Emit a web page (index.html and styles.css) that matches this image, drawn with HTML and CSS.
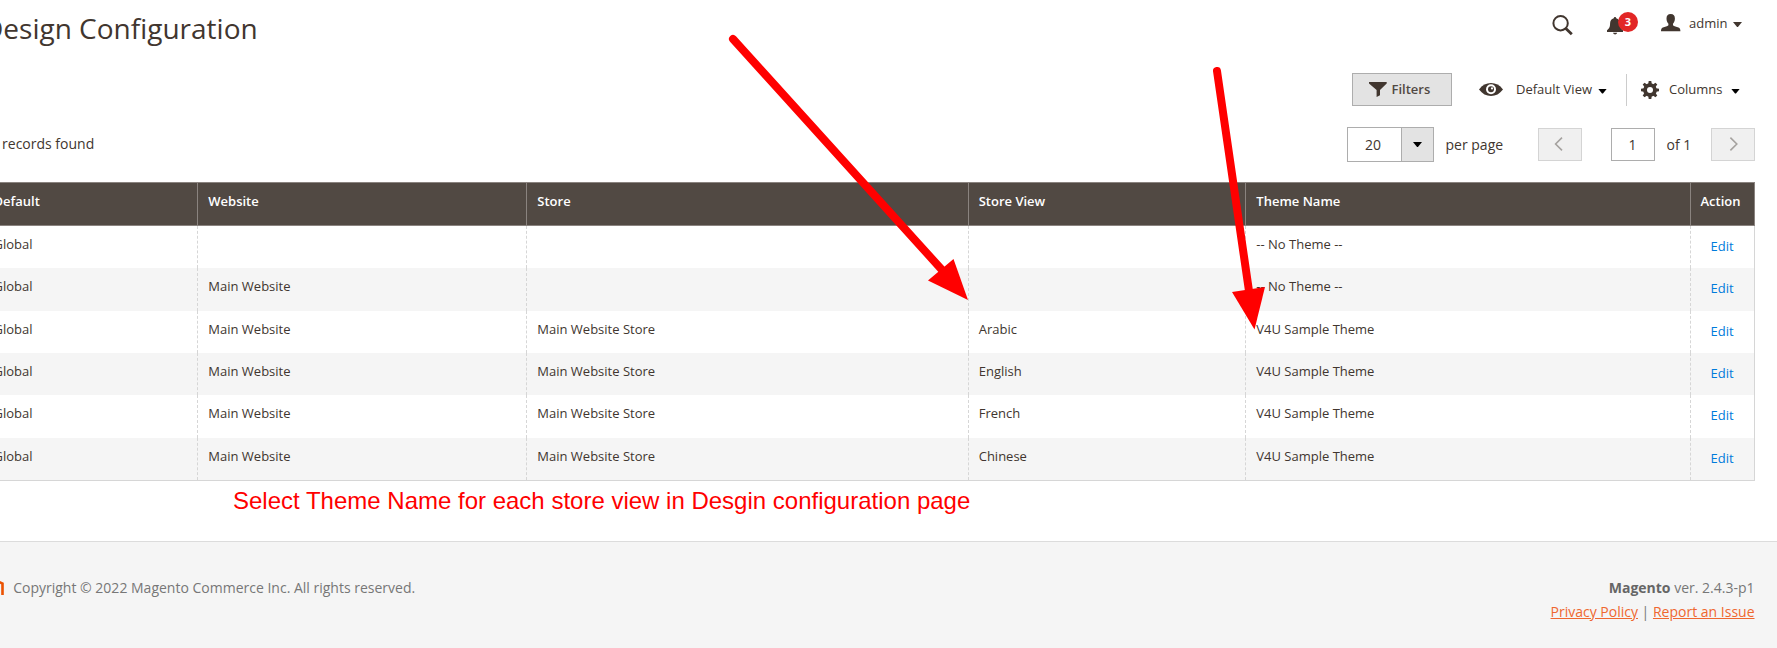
FILE: index.html
```html
<!DOCTYPE html>
<html lang="en">
<head>
<meta charset="utf-8">
<title>Design Configuration</title>
<link rel="stylesheet" href="styles.css">
</head>
<body>
<header class="page-header">
  <h1 class="page-title">Design Configuration</h1>
  <div class="header-tools">
    <svg class="icon-search" width="22" height="22" viewBox="0 0 22 22"><circle cx="8.600" cy="8.200" r="7.200" fill="none" stroke="#41362f" stroke-width="2"/><path d="M13.600 13.200l6.200 6" stroke="#41362f" stroke-width="2.800" fill="none"/></svg>
    <div class="notifications">
      <svg width="17" height="18" viewBox="0 0 17 18" fill="#41362f"><path d="M8 0c.8 0 1.200.6 1.200 1.300 2.500.6 3.600 2.500 3.700 5 .1 3.500.5 5 3.100 7v1.700H0v-1.700c2.600-2 3-3.500 3.100-7 .1-2.500 1.200-4.400 3.700-5C6.800.6 7.200 0 8 0zM6 15.800h4.200c-.4 1.300-1.200 1.700-2.100 1.700s-1.700-.4-2.100-1.700z"/></svg>
      <span class="badge">3</span>
    </div>
    <div class="account">
      <svg width="20" height="18" viewBox="0 0 20 18" fill="#41362f"><path d="M9.700 0c2.900 0 4.200 1.700 4.200 4.400 0 2.300-.8 4.200-1.900 5.300v1.500c1 1.100 3.500 1.500 5.500 2.300 1.500.6 1.900 2 1.900 3.800H0c0-1.800.4-3.200 1.900-3.800 2-.8 4.500-1.200 5.500-2.300V9.700C6.300 8.600 5.500 6.700 5.500 4.400 5.500 1.700 6.800 0 9.700 0z"/></svg>
      <span>admin</span>
      <i class="caret caret-soft"></i>
    </div>
  </div>
</header>

<main class="grid-page">
  <div class="toolbar">
    <button class="filters"><svg width="18" height="15" viewBox="0 0 18 15" fill="#41362f"><path d="M0 0h17.700v1.400L11 8v5.300L7.600 15V8L0 1.400z"/></svg><span>Filters</span></button>
    <div class="view-switch">
      <svg width="24" height="14" viewBox="0 0 24 14"><path d="M0 6.500C3.300 2 7.300 0 12 0s8.700 2 12 6.500c-3.300 4.400-7.300 6.500-12 6.500S3.300 10.900 0 6.500z" fill="#41362f"/><circle cx="12" cy="6.300" r="5" fill="#fff"/><circle cx="12" cy="6.300" r="3" fill="#41362f"/><circle cx="13" cy="5.400" r="1.100" fill="#fff"/></svg>
      <span>Default View</span><i class="caret"></i>
    </div>
    <div class="columns-switch">
      <svg width="18" height="18" viewBox="0 0 18 18"><g fill="#41362f"><circle cx="9" cy="9" r="6.800"/><path d="M7.200 3L7.700 0h2.600l.5 3v12l-.5 3H7.700l-.5-3z"/><path d="M7.200 3L7.700 0h2.600l.5 3v12l-.5 3H7.700l-.5-3z" transform="rotate(45 9 9)"/><path d="M7.200 3L7.700 0h2.600l.5 3v12l-.5 3H7.700l-.5-3z" transform="rotate(90 9 9)"/><path d="M7.200 3L7.700 0h2.600l.5 3v12l-.5 3H7.700l-.5-3z" transform="rotate(135 9 9)"/></g><circle cx="9" cy="9" r="3" fill="#fff"/></svg>
      <span>Columns</span><i class="caret"></i>
    </div>
  </div>

  <div class="pager-row">
    <p class="records">6 records found</p>
    <div class="pager">
      <div class="page-size"><span>20</span><b><i class="caret"></i></b></div>
      <span class="per-page">per page</span>
      <button class="step"><svg width="10" height="14" viewBox="0 0 10 14"><path d="M8 .600L1.600 7 8 13.400" fill="none" stroke="#a5a29f" stroke-width="1.600"/></svg></button>
      <span class="current">1</span>
      <span class="total">of 1</span>
      <button class="step step-next"><svg width="10" height="14" viewBox="0 0 10 14"><path d="M2.400.600L8.800 7l-6.400 6.400" fill="none" stroke="#a5a29f" stroke-width="1.600"/></svg></button>
    </div>
  </div>

  <div class="data-grid">
    <div class="row head"><div>Default</div><div>Website</div><div>Store</div><div>Store View</div><div>Theme Name</div><div>Action</div></div>
    <div class="row"><div>Global</div><div></div><div></div><div></div><div>-- No Theme --</div><div><a>Edit</a></div></div>
    <div class="row"><div>Global</div><div>Main Website</div><div></div><div></div><div>-- No Theme --</div><div><a>Edit</a></div></div>
    <div class="row"><div>Global</div><div>Main Website</div><div>Main Website Store</div><div>Arabic</div><div>V4U Sample Theme</div><div><a>Edit</a></div></div>
    <div class="row"><div>Global</div><div>Main Website</div><div>Main Website Store</div><div>English</div><div>V4U Sample Theme</div><div><a>Edit</a></div></div>
    <div class="row"><div>Global</div><div>Main Website</div><div>Main Website Store</div><div>French</div><div>V4U Sample Theme</div><div><a>Edit</a></div></div>
    <div class="row"><div>Global</div><div>Main Website</div><div>Main Website Store</div><div>Chinese</div><div>V4U Sample Theme</div><div><a>Edit</a></div></div>
  </div>
  <p class="note">Select Theme Name for each store view in Desgin configuration page</p>
</main>

<footer class="page-footer">
  <div class="copyright">
    <svg width="24" height="28" viewBox="0 0 24 28"><path d="M2 15V7l10-6 10.500 4.500V17M8.500 19V6M15.500 19V6" fill="none" stroke="#eb5202" stroke-width="2.600"/></svg>
    <span>Copyright © 2022 Magento Commerce Inc. All rights reserved.</span>
  </div>
  <div class="legal">
    <p><strong>Magento</strong> ver. 2.4.3-p1</p>
    <p><a>Privacy Policy</a> | <a>Report an Issue</a></p>
  </div>
</footer>

<svg class="arrows" width="1777" height="648" viewBox="0 0 1777 648">
  <g stroke="#f00" stroke-width="8" stroke-linecap="round"><path d="M733 39L943 271"/><path d="M1217 71L1249 291"/></g>
  <g fill="#f00"><path d="M968 300L928 280.500L953.500 259z"/><path d="M1254.500 329.500L1232 292L1265 287z"/></g>
</svg>
</body>
</html>
```

FILE: styles.css
```css
* { box-sizing: border-box; }
body {
  margin: 0;
  width: 1777px;
  height: 648px;
  overflow: hidden;
  position: relative;
  background: #fff;
  color: #41362f;
  font: 14px/19px "Open Sans", "Noto Sans", sans-serif;
}
p, h1 { margin: 0; }
svg { display: block; flex: none; }
button { font: inherit; color: inherit; padding: 0; }

.caret {
  flex: none;
  width: 9px;
  height: 5px;
  background: #000;
  clip-path: polygon(0 0, 100% 0, 55% 100%, 45% 100%);
}
.caret-soft { background: #41362f; }

.page-header {
  display: flex;
  justify-content: space-between;
  height: 73px;
  padding-right: 35px;
}
.page-title {
  margin: 9px 0 0 -17px;
  font-size: 28px;
  line-height: 38px;
  font-weight: 400;
}
.header-tools { display: flex; align-items: flex-start; }
.icon-search { margin-top: 15px; }
.notifications { position: relative; margin: 17px 0 0 33px; }
.badge {
  position: absolute;
  left: 11px;
  top: -5px;
  width: 20px;
  height: 20px;
  border-radius: 50%;
  background: #e22626;
  color: #fff;
  font-size: 11px;
  font-weight: 700;
  line-height: 20px;
  text-align: center;
}
.account { display: flex; margin: 14px 0 0 37px; font-size: 13px; line-height: 18px; }
.account span { width: 44px; margin-left: 8px; }
.account .caret { margin-top: 8px; }

.toolbar {
  display: flex;
  justify-content: flex-end;
  align-items: center;
  height: 33px;
  padding-right: 37px;
  font-size: 13px;
  line-height: 19px;
}
.filters {
  display: flex;
  align-items: center;
  width: 100px;
  height: 33px;
  padding-left: 16px;
  gap: 4.5px;
  border: 1px solid #adadad;
  background: #e3e3e3;
  color: #514943;
  font-weight: 600;
}
.view-switch { display: flex; align-items: center; margin-left: 27px; width: 147px; }
.view-switch span { width: 82px; margin-left: 13px; }
.columns-switch {
  display: flex;
  align-items: center;
  height: 32px;
  border-left: 1px solid #ccc;
  padding-left: 14px;
}
.columns-switch span { width: 62px; margin-left: 10px; }
.toolbar .caret { margin-top: 3px; }

.pager-row {
  display: flex;
  justify-content: space-between;
  margin-top: 21px;
  height: 35px;
  padding-right: 22px;
}
.records { margin: 7px 0 0 -9.6px; }
.pager { display: flex; align-items: center; }
.page-size {
  display: flex;
  width: 87px;
  height: 35px;
  border: 1px solid #adadad;
}
.page-size span { width: 53px; padding-left: 17px; line-height: 33px; }
.page-size b {
  display: flex;
  align-items: center;
  justify-content: center;
  flex: 1;
  border-left: 1px solid #adadad;
  background: #e3e3e3;
}
.per-page { width: 92.5px; margin-left: 11.5px; }
.step {
  display: flex;
  align-items: center;
  justify-content: center;
  width: 44px;
  height: 33px;
  border: 1px solid #d4d4d4;
  background: #f0f0f0;
}
.step svg { margin: -2px 2px 0 0; }
.step-next svg { margin-right: 0; }
.current {
  width: 44px;
  height: 33px;
  margin-left: 29px;
  padding-right: 1px;
  border: 1px solid #adadad;
  line-height: 31px;
  text-align: center;
}
.total { width: 44.5px; margin-left: 11.5px; }

.data-grid {
  width: 1755px;
  margin-top: 20px;
  border-right: 1px solid #d6d6d6;
  border-bottom: 1px solid #d6d6d6;
  font-size: 13px;
  line-height: 18px;
}
.row {
  display: grid;
  grid-template-columns: 198px 329px 442px 277px 445px 63px;
  height: 42.35px;
}
.row:nth-child(odd) { background: #f5f5f5; }
.row > div { padding: 9px 0 0 10.3px; border-right: 1px dashed #d6d6d6; }
.row > div:nth-child(4) { padding-left: 9.7px; }
.row > div:first-child { padding-left: 0; text-indent: -6.5px; }
.row > div:last-child { border-right: 0; padding: 11px 1px 0 0; text-align: center; }
.row a { color: #007bdb; }
.row.head {
  height: 44px;
  margin-right: -1px;
  background: #514943;
  border: solid #8a837f;
  border-width: 1px 1px 1px 0;
  color: #fff;
  font-weight: 600;
}
.row.head > div { border-right: 1px solid #8a837f; }
.row.head > div:last-child { border-right: 0; padding: 9px 4px 0 0; }

.note {
  margin: 6px 0 0 233px;
  color: #f00;
  font: 24px/28px "Liberation Sans", Arial, sans-serif;
}

.page-footer {
  display: flex;
  justify-content: space-between;
  height: 107px;
  margin-top: 26px;
  padding: 36px 22px 0 0;
  border-top: 1px solid #dcdcdc;
  background: #f5f5f5;
  color: #777;
}
.copyright { display: flex; margin-left: -20px; }
.copyright span { margin: 0 0 0 9.2px; }
.legal { text-align: right; line-height: 24px; }
.legal p { margin-right: 0.5px; }
.legal p:first-child { margin-top: -2.5px; }
.legal strong { color: #666; }
.legal a { color: #ef672f; text-decoration: underline; }

.arrows { position: absolute; left: 0; top: 0; pointer-events: none; }
```
